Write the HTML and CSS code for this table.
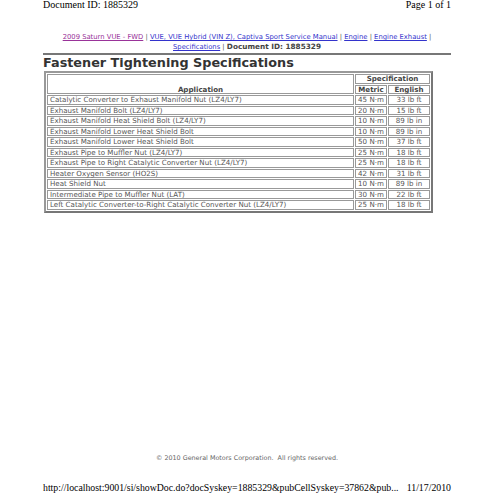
FILE: index.html
```html
<!DOCTYPE html>
<html>
<head>
<meta charset="utf-8">
<link rel="stylesheet" href="styles.css">
</head>
<body>
<div class="sheet">
  <div class="top">
    <span>Document ID: 1885329</span>
    <span>Page 1 of 1</span>
  </div>
  <div class="crumbs">
    <a class="visited" href="#">2009 Saturn VUE - FWD</a> | <a href="#">VUE, VUE Hybrid (VIN Z), Captiva Sport Service Manual</a> | <a href="#">Engine</a> | <a href="#">Engine Exhaust</a> |<br>
    <a href="#">Specifications</a> | <b>Document ID: 1885329</b>
  </div>
  <div class="rule"></div>
  <h1 class="title">Fastener Tightening Specifications</h1>
  <table class="spec">
    <tr><th rowspan="2" class="app">Application</th><th colspan="2">Specification</th></tr>
    <tr><th class="m">Metric</th><th class="e">English</th></tr>
    <tr><td>Catalytic Converter to Exhaust Manifold Nut (LZ4/LY7)</td><td class="c">45 N·m</td><td class="c">33 lb ft</td></tr>
    <tr><td>Exhaust Manifold Bolt (LZ4/LY7)</td><td class="c">20 N·m</td><td class="c">15 lb ft</td></tr>
    <tr><td>Exhaust Manifold Heat Shield Bolt (LZ4/LY7)</td><td class="c">10 N·m</td><td class="c">89 lb in</td></tr>
    <tr><td>Exhaust Manifold Lower Heat Shield Bolt</td><td class="c">10 N·m</td><td class="c">89 lb in</td></tr>
    <tr><td>Exhaust Manifold Lower Heat Shield Bolt</td><td class="c">50 N·m</td><td class="c">37 lb ft</td></tr>
    <tr><td>Exhaust Pipe to Muffler Nut (LZ4/LY7)</td><td class="c">25 N·m</td><td class="c">18 lb ft</td></tr>
    <tr><td>Exhaust Pipe to Right Catalytic Converter Nut (LZ4/LY7)</td><td class="c">25 N·m</td><td class="c">18 lb ft</td></tr>
    <tr><td>Heater Oxygen Sensor (HO2S)</td><td class="c">42 N·m</td><td class="c">31 lb ft</td></tr>
    <tr><td>Heat Shield Nut</td><td class="c">10 N·m</td><td class="c">89 lb in</td></tr>
    <tr><td>Intermediate Pipe to Muffler Nut (LAT)</td><td class="c">30 N·m</td><td class="c">22 lb ft</td></tr>
    <tr><td>Left Catalytic Converter-to-Right Catalytic Converter Nut (LZ4/LY7)</td><td class="c">25 N·m</td><td class="c">18 lb ft</td></tr>
  </table>
  <div class="spacer"></div>
  <div class="copy">© 2010 General Motors Corporation.&nbsp; All rights reserved.</div>
  <div class="bottom">
    <span>http://localhost:9001/si/showDoc.do?docSyskey=1885329&amp;pubCellSyskey=37862&amp;pub...</span>
    <span>11/17/2010</span>
  </div>
</div>
</body>
</html>
```

FILE: styles.css
```css
html, body {
  margin: 0;
  padding: 0;
  background: #fff;
}
.sheet {
  width: 408px;
  height: 495px;
  margin-left: 43px;
  display: flex;
  flex-direction: column;
  font-family: "DejaVu Sans", Verdana, sans-serif;
}
.top {
  display: flex;
  justify-content: space-between;
  font-family: "Liberation Serif", serif;
  font-size: 10px;
  line-height: 10px;
  margin-top: 0;
  color: #000;
}
.crumbs {
  margin-top: 23px;
  text-align: center;
  font-size: 6.8px;
  line-height: 9px;
  color: #555;
}
.crumbs a {
  color: #3333cc;
}
.crumbs a.visited {
  color: #993399;
}
.crumbs b {
  font-size: 7.3px;
  color: #444;
}
.rule {
  height: 2px;
  background: #777;
  margin-top: 1px;
}
.title {
  margin: 1px 0 1px 0;
  font-size: 12.8px;
  line-height: 14px;
  font-weight: bold;
  color: #333;
}
.spec {
  margin-left: 1px;
  width: 389px;
  border-collapse: separate;
  border-spacing: 1px;
  border: 2px solid #999;
  border-right-color: #777;
  border-bottom-color: #777;
  font-size: 7.1px;
  color: #555;
}
.spec th, .spec td {
  border: 1px solid #999;
  padding: 0 2px;
  height: 7.5px;
  line-height: 7.5px;
  white-space: nowrap;
}
.spec th {
  color: #444;
  font-weight: bold;
  text-align: center;
}
.spec th.app {
  vertical-align: bottom;
}
.spec th.m, .spec th.e, .spec td.c {
  padding: 0 1px;
  text-align: center;
}
.spec th.m {
  width: 28px;
}
.spec th.e {
  width: 38px;
}
.spacer {
  flex: 1;
}
.copy {
  text-align: center;
  font-size: 6.4px;
  line-height: 7px;
  color: #666;
  margin-bottom: 20px;
}
.bottom {
  display: flex;
  justify-content: space-between;
  font-family: "Liberation Serif", serif;
  font-size: 9.8px;
  line-height: 11px;
  margin-bottom: 2px;
  color: #000;
}
```
